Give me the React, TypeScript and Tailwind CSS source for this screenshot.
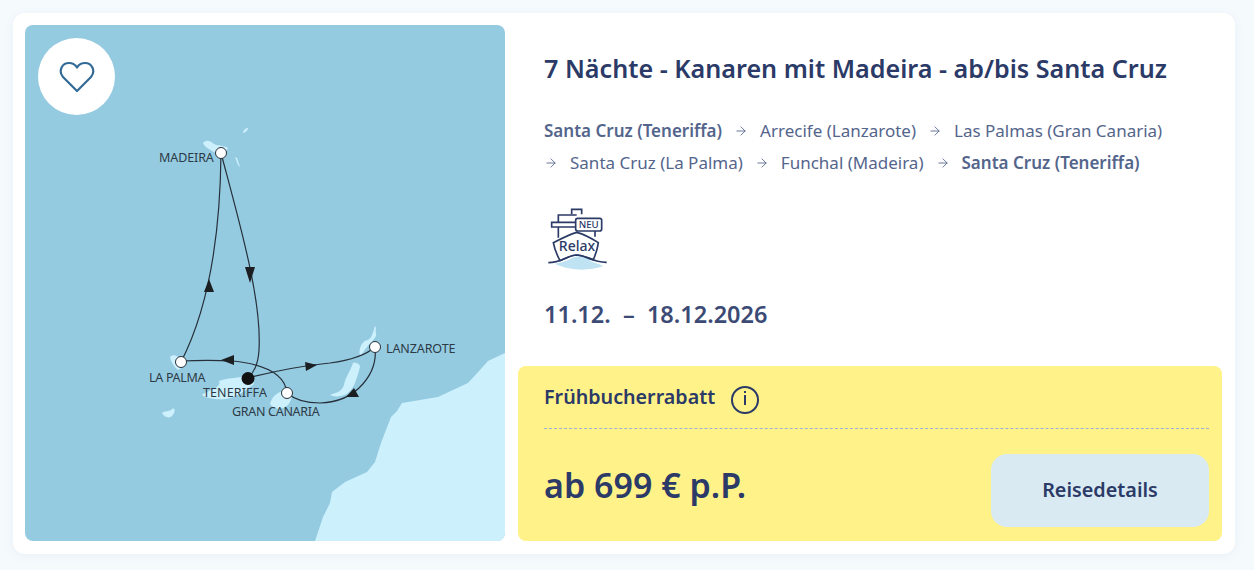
import { ArrowRight } from "lucide-react";

const stops = [
  { name: "Santa Cruz (Teneriffa)", bold: true },
  { name: "Arrecife (Lanzarote)" },
  { name: "Las Palmas (Gran Canaria)" },
  { name: "Santa Cruz (La Palma)" },
  { name: "Funchal (Madeira)" },
  { name: "Santa Cruz (Teneriffa)", bold: true },
];

const islands = [
  "M203 143 C206 139 211 141 214 144 C219 146 225 146 228 148 C226 152 222 155 216 153 C211 150 205 148 203 143Z",
  "M243 133 C243 130 246 128 248 128 C248 130 245 133 243 133Z",
  "M235 157 L237 158 L240 167 L238 165Z",
  "M170 357 C173 354 176 355 180 358 C186 362 182 369 178 370 C174 367 171 362 170 357Z",
  "M219 381 C226 378 240 378 250 375 L254 384 C246 390 238 397 226 399 C215 400 206 398 202 395 C208 390 222 388 219 381Z",
  "M162 413 C166 410 170 412 172 409 C176 407 175 413 172 416 C169 419 164 417 162 413Z",
  "M270 404 C272 396 278 391 288 390 C294 392 292 400 288 405 C282 410 274 410 270 404Z",
  "M375 326 C377 328 375 330 376 333 C377 337 374 338 372 342 C368 344 364 352 360 356 C358 350 362 340 368 340 C372 338 373 332 375 326Z",
  "M353 363 C356 362 360 364 360 367 C358 374 356 382 353 387 C350 392 345 396 340 396 C336 397 332 396 330 395 C335 393 342 392 344 385 C345 378 350 372 353 363Z",
];

function CruiseMap() {
  return (
    <svg viewBox="25 25 480 516" className="block w-full h-full">
      <path
        d="M505 353 L488 361 L480 370 L468 383 L453 390 L438 397 L402 403 L397 411 L391 417 L381 443 L375 462 L367 472 L345 482 L332 492 L330 503 L323 517 L315 541 L505 541Z"
        fill="#cdf0fd"
      />
      {islands.map((d, i) => (
        <path key={i} d={d} fill="#cdf0fd" />
      ))}
      <g fill="none" stroke="#26303a" strokeWidth="1.2">
        <path d="M248 378 C275 371 310 365 330 363 C345 361 365 356 375 347" />
        <path d="M375 347 C378 372 358 402 320 403 C305 403 295 400 287 393" />
        <path d="M287 393 C285 372 262 364 233 361 C215 360 200 360 181 361" />
        <path d="M181 362 C200 325 220 260 221 153" />
        <path d="M221 153 C240 225 262 300 259 350 C258 365 254 372 248 378" />
      </g>
      <g fill="#1c1f22">
        <polygon points="317,365 305,362 306,371" />
        <polygon points="346,397 359,397 354,388" />
        <polygon points="221,360 234,355 234,365" />
        <polygon points="209,279 204,292 214,292" />
        <polygon points="250,283 245,267 255,267" />
      </g>
      <g fill="#fff" stroke="#26303a" strokeWidth="1">
        <circle cx="221" cy="153" r="5.5" />
        <circle cx="181" cy="362" r="5.5" />
        <circle cx="287" cy="393" r="5.5" />
        <circle cx="375" cy="347" r="5.5" />
      </g>
      <circle cx="248" cy="378.5" r="6.5" fill="#111" />
      <g fill="#2c3a45" fontSize="12.5" fontFamily="'Noto Sans', sans-serif">
        <text x="159" y="162" letterSpacing="-0.1">MADEIRA</text>
        <text x="149" y="382" letterSpacing="-0.3">LA PALMA</text>
        <text x="203" y="397" letterSpacing="0.1">TENERIFFA</text>
        <text x="232" y="416" letterSpacing="-0.3">GRAN CANARIA</text>
        <text x="386" y="353" letterSpacing="-0.1">LANZAROTE</text>
      </g>
    </svg>
  );
}

function RelaxIcon() {
  return (
    <svg viewBox="0 0 270 255" className="w-[90px] h-[85px] -ml-[9px]">
      <path d="M60 206 C90 204 110 186 130 184 C145 182 155 176 166 178 L166 198 C178 204 190 204 204 214 C170 226 130 226 100 220 C85 216 72 212 60 206Z" fill="#bfe3f2" />
      <g fill="none" stroke="#2b3a67" strokeWidth="5">
        <path d="M110 58 V43 H140 V58" />
        <path d="M70 82 V60 H125" />
        <path d="M122 82 H50 V96 H122" />
        <path d="M70 96 V128 M180 108 V125" />
        <path d="M55 143 C80 130 105 118 125 112 C148 118 170 130 190 143 C188 160 182 178 175 194 C160 190 145 180 125 180 C105 180 90 192 75 197 C66 180 58 160 55 143Z" fill="#fff" />
        <path d="M40 203 C78 203 100 181 125 180 C150 180 175 203 215 202" />
      </g>
      <rect x="122" y="70" width="78" height="38" rx="6" fill="#fff" stroke="#2b3a67" strokeWidth="5" />
      <text x="161" y="99" textAnchor="middle" fontSize="29" fontWeight="500" fill="#2b3a67" fontFamily="'Noto Sans', sans-serif">NEU</text>
      <text x="126" y="167" textAnchor="middle" fontSize="42" fontWeight="500" fill="#2b3a67" fontFamily="'Noto Sans', sans-serif">Relax</text>
    </svg>
  );
}

export default function App() {
  return (
    <div className="h-[570px] bg-[#f5fafd] p-[13px] pb-4 pr-[19px] font-['Noto_Sans',sans-serif] text-[#2b3a67]">
      <div className="h-[541px] bg-white rounded-xl shadow-[0_2px_10px_rgba(90,130,160,0.08)] pl-3 pt-3 pb-[13px] pr-[13px] flex gap-[13px]">
        {/* Map */}
        <div className="relative w-[480px] h-[516px] shrink-0 bg-[#95cbe1] rounded-lg overflow-hidden">
          <CruiseMap />
          <button className="absolute left-[13px] top-[13px] w-[77px] h-[77px] rounded-full bg-white flex items-center justify-center">
            <svg viewBox="0 0 36 34" className="w-9 h-[34px]" fill="none" stroke="#336b96" strokeWidth="2.2" strokeLinejoin="round">
              <path d="M18 31 L4 17 C-1 11 3 3 10 3 C13.5 3 16.5 5 18 7.5 C19.5 5 22.5 3 26 3 C33 3 37 11 32 17Z" />
            </svg>
          </button>
        </div>

        {/* Details */}
        <div className="flex-1 flex flex-col">
          <div className="flex-1 pl-[26px] pr-4">
            <h2 className="mt-[23px] text-[25.15px] leading-[40px] font-semibold whitespace-nowrap">
              7 Nächte - Kanaren mit Madeira - ab/bis Santa Cruz
            </h2>
            <div className="mt-[27px] flex flex-wrap gap-x-3 text-[17px] leading-[32px] text-[#54658c]">
              {stops.map((s, i) => (
                <span key={i} className="flex items-center gap-3 whitespace-nowrap">
                  {i > 0 && <ArrowRight size={14} strokeWidth={1.5} />}
                  <span className={s.bold ? "font-semibold" : ""}>{s.name}</span>
                </span>
              ))}
            </div>
            <div className="mt-4 h-[85px]">
              <RelaxIcon />
            </div>
            <p className="mt-[18px] text-[23.5px] leading-8 font-semibold text-[#3c4b75]">11.12. &nbsp;–&nbsp; 18.12.2026</p>
          </div>

          <div className="h-[175px] shrink-0 bg-[#fff288] rounded-lg pl-[26px] pr-[13px] flex flex-col">
            <div className="h-[63px] flex items-center gap-4 border-b border-dashed border-[#a3aed8]">
              <span className="text-[19.7px] font-semibold">Frühbucherrabatt</span>
              <span className="w-7 h-7 mt-[6px] rounded-full border-2 border-[#2b3a67] flex items-center justify-center">
                <span className="w-[2px] h-[10px] bg-[#2b3a67] relative before:absolute before:content-[''] before:w-[2px] before:h-[2px] before:bg-[#2b3a67] before:-top-[4px]" />
              </span>
            </div>
            <div className="flex-1 flex items-center justify-between pt-[11px]">
              <span className="text-[34px] font-semibold -mt-[11px]">ab 699 € p.P.</span>
              <button className="w-[218px] h-[73px] rounded-2xl bg-[#d9eaf2] text-[19.8px] font-semibold pb-[2px]">Reisedetails</button>
            </div>
          </div>
        </div>
      </div>
    </div>
  );
}
